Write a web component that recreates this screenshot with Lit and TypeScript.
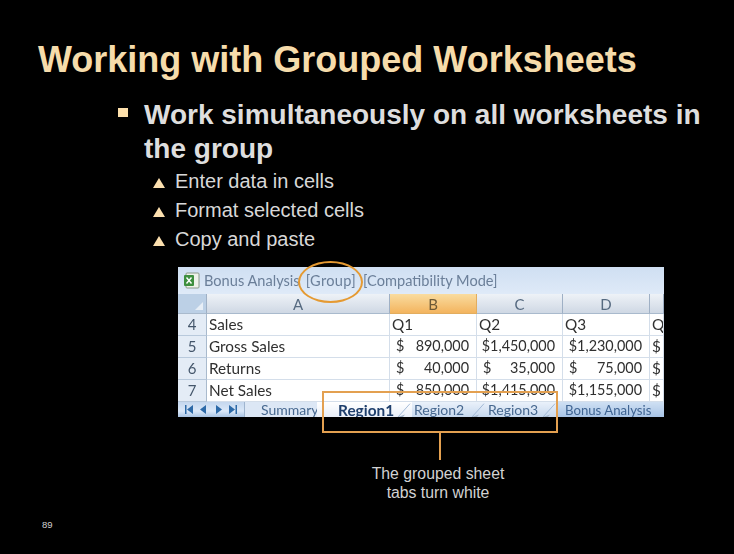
import { LitElement, html, css, svg } from "lit";
import { customElement } from "lit/decorators.js";

const rows = [
  ["4", "Sales", "Q1", "Q2", "Q3", "Q4"],
  ["5", "Gross Sales", "$ | 890,000", "$1,450,000", "$1,230,000", "$"],
  ["6", "Returns", "$ | 40,000", "$ | 35,000", "$ | 75,000", "$"],
  ["7", "Net Sales", "$ | 850,000", "$1,415,000", "$1,155,000", "$"],
];

@customElement("app-root")
export class AppRoot extends LitElement {
  static styles = css`
    :host { display: block; width: 734px; height: 554px; background: #000; color: #e4e4e4; font-family: "Liberation Sans", Arial, sans-serif; overflow: hidden; position: relative; }
    .slide { display: flex; flex-direction: column; height: 554px; box-sizing: border-box; padding: 39px 0 0 38px; }
    h1 { margin: 0; font-size: 36px; line-height: 42px; font-weight: bold; color: #f6dcab; white-space: nowrap; }
    .main { display: flex; margin: 17px 0 0 79px; }
    .sq { width: 10px; height: 9px; background: #fde0ac; margin: 10px 16px 0 1px; flex: none; }
    .main p { margin: 0; font-size: 28px; line-height: 34px; font-weight: bold; white-space: nowrap; color: #dedede; }
    ul { list-style: none; margin: 1px 0 0 115px; padding: 0; }
    li { display: flex; align-items: center; height: 29px; font-size: 20px; color: #d8d8d8; }
    .tri { width: 0; height: 0; border-left: 6px solid transparent; border-right: 6px solid transparent; border-bottom: 10px solid #fbdfae; margin: 3px 10px 0 0; }
    .sheet { position: relative; margin: 13px 0 0 140px; width: 486px; height: 150px; color: #333; font-family: Lato, "Noto Sans", sans-serif; font-size: 15.3px; display: flex; flex-direction: column; }
    .titlebar { height: 27px; flex: none; display: flex; align-items: center; gap: 4px; padding-left: 5px; background: linear-gradient(#cfdff2, #dfeaf8); color: #6b7f99; font-size: 14.6px; box-sizing: border-box; white-space: nowrap; overflow: hidden; filter: blur(0.35px); }
    .titlebar span.g { margin-left: 2px; letter-spacing: 0.3px; }
    .titlebar span.m { margin-left: 3px; }
    .xl { width: 17px; height: 17px; flex: none; }
    .grid { display: grid; grid-template-columns: 29px 183px 87px 86px 87px 14px; grid-template-rows: 20px; grid-auto-rows: 22px; flex: none; background: #fff; filter: blur(0.35px); }
    .hd { height: 20px; display: flex; align-items: center; justify-content: center; background: linear-gradient(#eef2f7, #cfd8e4); border-right: 1px solid #9fb0c5; border-bottom: 1px solid #a9bacd; box-sizing: border-box; color: #566a80; font-size: 15px; }
    .hd.on { background: linear-gradient(#f9dca0, #f3b45e); color: #6d5a36; border-color: #e2ad5f; }
    .hd.corner { background: #bcd0e6; justify-content: flex-end; align-items: flex-end; padding: 0 3px 3px 0; }
    .corner i { width: 0; height: 0; border-left: 8px solid transparent; border-bottom: 8px solid #e7eef6; }
    .rh { background: #e4ecf6; color: #44566b; display: flex; align-items: center; justify-content: center; padding-bottom: 2px; border-bottom: 1px solid #b8c9dc; border-right: 1px solid #a9bacd; box-sizing: border-box; font-size: 15px; }
    .c { display: flex; align-items: center; justify-content: space-between; padding: 0 4px 2px 2px; border-bottom: 1px solid #d4deea; border-right: 1px solid #d4deea; box-sizing: border-box; white-space: nowrap; overflow: hidden; color: #303030; }
    .c.n { padding: 0 7px 2px 6px; font-size: 14.4px; }
    .c.n.fit { justify-content: flex-end; }
    .c.l { padding-left: 2px; }
    .tabs { flex: 1; display: flex; align-items: center; background: linear-gradient(#c4d7ee, #dbe8f8 60%, #a9c4e4); color: #47688f; font-size: 14px; white-space: nowrap; overflow: hidden; filter: blur(0.35px); }
    .nav { width: 66px; flex: none; display: flex; align-items: center; justify-content: space-around; padding: 0 4px 0 4px; box-sizing: border-box; height: 100%; }
    .nav svg { width: 9px; height: 9px; }
    .tab { height: 100%; display: flex; align-items: center; box-sizing: border-box; position: relative; flex: none; }
    .tab.s { width: 75px; background: #dce7f5; padding: 0 0 0 16px; border-left: 1px solid #9fb5cf; }
    .tab.a { width: 95px; background: linear-gradient(#fff, #e9eff8); color: #1f3f6c; font-weight: bold; padding: 0 0 0 21px; font-size: 15.4px; margin-left: -2px; }
    .tab.o { width: 74px; padding: 0 0 0 2px; background: linear-gradient(#eaf1fa, #c6d8ee); }
    .tab.o.last { width: 71px; }
    .tab.b { background: linear-gradient(#cfe0f3, #a8c4e6); padding: 0 0 0 8px; flex: 1; color: #3f6492; font-size: 13.2px; }
    .slant { position: absolute; right: 0; top: 0; width: 16px; height: 100%; }
    .ellipse { position: absolute; left: 120px; top: -6px; width: 65px; height: 42px; border: 2.5px solid #e59a32; border-radius: 50%; box-sizing: border-box; }
    .box { position: absolute; left: 144px; top: 124px; width: 236px; height: 42px; border: 2px solid #e3a050; box-sizing: border-box; }
    .lead { position: absolute; left: 261px; top: 166px; width: 2px; height: 27px; background: #e3a050; }
    .caption { position: absolute; left: 336px; top: 464px; width: 204px; text-align: center; font-size: 15.8px; line-height: 19px; color: #d2d2d2; }
    .page { position: absolute; left: 42px; top: 519px; font-size: 9.5px; color: #d0d0d0; }
  `;

  private cell(v: string) {
    if (v.includes("|")) {
      const [a, b] = v.split(" | ");
      return html`<div class="c n"><span>${a}</span><span>${b}</span></div>`;
    }
    return html`<div class="c n fit">${v}</div>`;
  }

  render() {
    const arrow = (d: string) => svg`<path d=${d} fill="#2d6aa8"/>`;
    const slant = html`<svg class="slant" viewBox="0 0 16 18" preserveAspectRatio="none"><path d="M2 18L14 2" stroke="#9db5d2" fill="none"/><path d="M2 18h5l2-3z" fill="#9fb2c9"/></svg>`;
    return html`
      <div class="slide">
        <h1>Working with Grouped Worksheets</h1>
        <div class="main"><div class="sq"></div><p>Work simultaneously on all worksheets in<br />the group</p></div>
        <ul>
          <li><span class="tri"></span>Enter data in cells</li>
          <li><span class="tri"></span>Format selected cells</li>
          <li><span class="tri"></span>Copy and paste</li>
        </ul>
        <div class="sheet">
          <div class="titlebar">
            <svg class="xl" viewBox="0 0 17 17"><rect x="3" y="1" width="13" height="15" rx="1" fill="#eef2ea" stroke="#8a9a8a"/><rect x="1" y="3" width="10" height="11" rx="1" fill="#3d8f3e"/><path d="M3.5 5.5l5 6M8.5 5.5l-5 6" stroke="#fff" stroke-width="1.4"/></svg>
            <span>Bonus Analysis</span><span class="g">[Group]</span><span class="m">[Compatibility Mode]</span>
          </div>
          <div class="grid">
            <div class="hd corner"><i></i></div>
            <div class="hd">A</div><div class="hd on">B</div><div class="hd">C</div><div class="hd">D</div><div class="hd"></div>
            ${rows.map((r) => html`
              <div class="rh">${r[0]}</div>
              <div class="c l">${r[1]}</div>
              ${r.slice(2, 5).map((v) => (v.length === 2 ? html`<div class="c l">${v}</div>` : this.cell(v)))}
              <div class="c l">${r[5]}</div>
            `)}
          </div>
          <div class="tabs">
            <div class="nav">
              <svg viewBox="0 0 9 9">${arrow("M0 0h1.5v9H0zM8 0v9L2 4.5z")}</svg>
              <svg viewBox="0 0 9 9">${arrow("M7 0v9L1 4.5z")}</svg>
              <svg viewBox="0 0 9 9">${arrow("M2 0v9l6-4.5z")}</svg>
              <svg viewBox="0 0 9 9">${arrow("M1 0v9l6-4.5zM7.5 0H9v9H7.5z")}</svg>
            </div>
            <div class="tab s">Summary</div>
            <div class="tab a">Region1${slant}</div>
            <div class="tab o">Region2${slant}</div>
            <div class="tab o last">Region3${slant}</div>
            <div class="tab b">Bonus Analysis</div>
          </div>
          <div class="ellipse"></div>
          <div class="box"></div>
          <div class="lead"></div>
        </div>
      </div>
      <div class="caption">The grouped sheet<br />tabs turn white</div>
      <div class="page">89</div>
    `;
  }
}
